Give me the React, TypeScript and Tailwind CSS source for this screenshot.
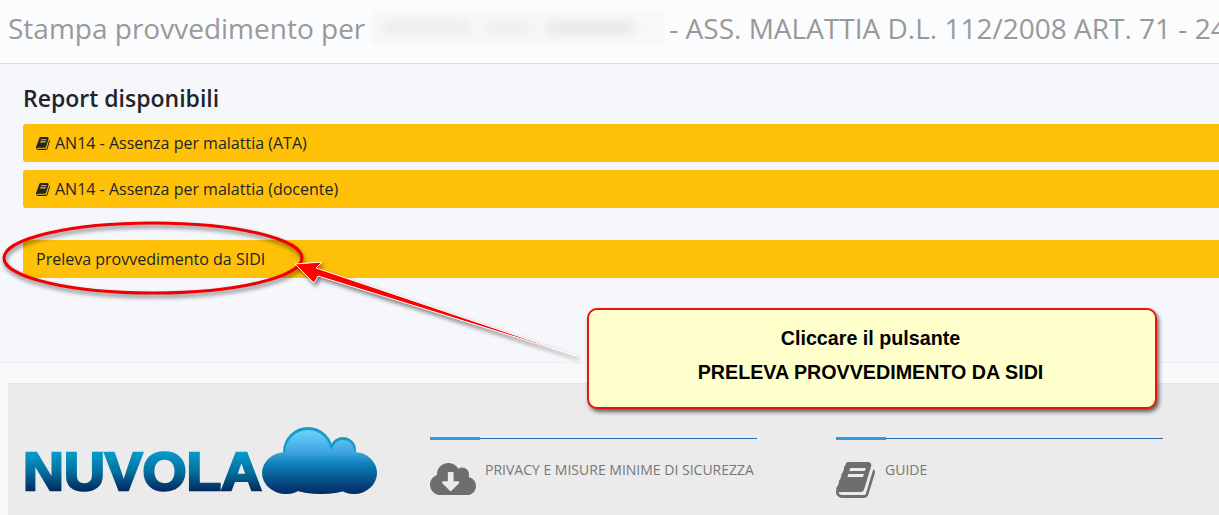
import type { ReactNode } from "react";
import { FaCloudDownloadAlt } from "react-icons/fa";

const BOOK_PATH =
  "M1639 478q40 57 18 129l-275 906q-19 64-76.5 107.5t-122.5 43.5h-923q-77 0-148.5-53.5t-99.5-131.5q-24-67-2-127 0-4 3-27t4-37q1-8-3-21.5t-3-19.5q2-11 8-21t16.5-23.5 16.5-23.5q23-38 45-91.5t30-91.5q3-10 .5-30t-.5-28q3-11 17-28t17-23q21-36 42-92t25-90q1-9-2.5-32t.5-28q4-13 22-30.5t22-22.5q19-26 42.5-84.5t27.5-96.5q1-8-3-25.5t-2-26.5q2-8 9-18t18-23 17-21q8-12 16.5-30.5t15-35 16-36 19.5-32 26.5-23.5 36-11.5 47.5 5.5l-1 3q38-9 51-9h761q74 0 114 56t18 130l-274 906q-36 119-71.5 153.5t-128.5 34.5h-869q-27 0-38 15-11 16-1 43 24 70 144 70h923q29 0 56-15.5t35-41.5l300-987q7-22 5-57 38 15 59 43zm-1064 2q-4 13 2 22.5t20 9.5h608q13 0 25.5-9.5t16.5-22.5l21-64q4-13-2-22.5t-20-9.5h-608q-13 0-25.5 9.5t-16.5 22.5zm-83 256q-4 13 2 22.5t20 9.5h608q13 0 25.5-9.5t16.5-22.5l21-64q4-13-2-22.5t-20-9.5h-608q-13 0-25.5 9.5t-16.5 22.5z";

const BookIcon = ({ className }: { className: string }) => (
  <svg viewBox="0 0 1792 1792" className={className} fill="currentColor">
    <path d={BOOK_PATH} />
  </svg>
);

const ReportBar = ({ label, icon }: { label: string; icon?: boolean }) => (
  <div className="flex h-[38px] w-[1230px] items-center gap-[4px] rounded-[3px] bg-[#ffc107] pl-[13px] text-[16px] text-[#212529]">
    {icon && <BookIcon className="h-[15px] w-[15px]" />}
    <span>{label}</span>
  </div>
);

const Logo = () => (
  <svg viewBox="0 0 354 68" className="h-[68px] w-[354px] shrink-0">
    <defs>
      <linearGradient id="letters" gradientUnits="userSpaceOnUse" x1="0" y1="25" x2="0" y2="64">
        <stop offset="0" stopColor="#049ccd" />
        <stop offset="0.5" stopColor="#04709f" />
        <stop offset="1" stopColor="#02295f" />
      </linearGradient>
      <linearGradient id="cloud" gradientUnits="userSpaceOnUse" x1="0" y1="1" x2="0" y2="67">
        <stop offset="0" stopColor="#6fd8ff" />
        <stop offset="0.36" stopColor="#3ea6e0" />
        <stop offset="0.55" stopColor="#0c7fb8" />
        <stop offset="1" stopColor="#022a62" />
      </linearGradient>
    </defs>
    <text
      x="0"
      y="63"
      textLength="239"
      lengthAdjust="spacingAndGlyphs"
      fontFamily="'Liberation Sans', sans-serif"
      fontWeight="700"
      fontSize="53"
      fill="url(#letters)"
      stroke="url(#letters)"
      strokeWidth="2.5"
    >
      NUVOLA
    </text>
    <circle cx="285" cy="25" r="24" fill="#1b9ac6" stroke="#1b9ac6" strokeWidth="2" />
    <circle cx="320" cy="23" r="12" fill="#1b9ac6" stroke="#1b9ac6" strokeWidth="2" />
    <g fill="url(#cloud)">
      <circle cx="285" cy="26" r="23" />
      <circle cx="320" cy="24" r="11" />
      <rect x="290" y="22" width="30" height="20" />
      <ellipse cx="263" cy="46" rx="24" ry="21" />
      <ellipse cx="331" cy="46" rx="23" ry="21" />
      <ellipse cx="298" cy="50" rx="42" ry="17" />
    </g>
  </svg>
);

const FooterColumn = ({
  label,
  className,
  icon,
}: {
  label: string;
  className: string;
  icon: ReactNode;
}) => (
  <div className={className}>
    <div className="relative h-[1px] w-[327px] bg-[#2a6ca8]">
      <div className="absolute top-[-1px] left-0 h-[3px] w-[50px] bg-[#3498db]" />
    </div>
    <div className="mt-[23px] flex items-start">
      {icon}
      <span className="text-[14px] leading-[16px] text-[#777]">{label}</span>
    </div>
  </div>
);

const App = () => {
  return (
    <div className="relative h-[515px] w-full overflow-hidden bg-[#f9f9f9] font-['Open_Sans',sans-serif]">
      <header className="flex h-[64px] items-center overflow-hidden border-b border-[#d5dde5] bg-[#fbfcfe] pb-[8px] pl-[8px] text-[28px] whitespace-nowrap text-[#999]">
        <span>Stampa provvedimento per</span>
        <div className="ml-[6px] flex h-[35px] w-[294px] shrink-0 items-center gap-[12px] bg-[#f8f8f8] px-[10px]">
          <div className="h-[13px] w-[90px] rounded-full bg-[#ececec] blur-[5px]" />
          <div className="h-[13px] w-[50px] rounded-full bg-[#eeeeee] blur-[5px]" />
          <div className="h-[13px] w-[90px] rounded-full bg-[#e8e8e8] blur-[5px]" />
        </div>
        <span className="ml-[4px]">- ASS. MALATTIA D.L. 112/2008 ART. 71 - 24 MESI</span>
      </header>

      <main className="h-[299px] border-b border-[#eeeeee] bg-[#f5f7fb] pt-[19px] pl-[23px]">
        <h3 className="text-[23px] leading-[30px] font-semibold text-[#212529]">
          Report disponibili
        </h3>
        <div className="mt-[11px] flex flex-col gap-[8px]">
          <ReportBar icon label="AN14 - Assenza per malattia (ATA)" />
          <ReportBar icon label="AN14 - Assenza per malattia (docente)" />
        </div>
        <div className="mt-[32px]">
          <ReportBar label="Preleva provvedimento da SIDI" />
        </div>
      </main>

      <footer className="mt-[20px] ml-[8px] flex h-[132px] border-t border-[#e5e5e5] bg-[#ebebeb]">
        <div className="mt-[43px] ml-[15px]">
          <Logo />
        </div>
        <FooterColumn
          className="mt-[54px] ml-[53px]"
          label="PRIVACY E MISURE MINIME DI SICUREZZA"
          icon={<FaCloudDownloadAlt className="mr-[9px] -mt-[6px] h-[46px] w-[46px] shrink-0 text-[#6e6e6e]" />}
        />
        <FooterColumn
          className="mt-[54px] ml-[79px]"
          label="GUIDE"
          icon={<BookIcon className="mr-[7px] -mt-[3px] h-[42px] w-[42px] shrink-0 text-[#6e6e6e]" />}
        />
      </footer>

      <svg className="pointer-events-none absolute top-0 left-0 h-[515px] w-[1219px]" viewBox="0 0 1219 515">
        <ellipse
          cx="153"
          cy="258"
          rx="149"
          ry="35"
          fill="none"
          stroke="#f00000"
          strokeWidth="3"
          className="drop-shadow-[1px_3px_2px_rgba(0,0,0,0.5)]"
        />
        <polygon
          points="295,264 322,262 316,268 577,356 318,276 314,283"
          fill="#ff0000"
          stroke="#ffffff"
          strokeWidth="1"
          className="drop-shadow-[2px_3px_2px_rgba(0,0,0,0.5)]"
        />
      </svg>

      <div className="absolute top-[308px] left-[587px] flex h-[101px] w-[570px] flex-col items-center rounded-[10px] border-2 border-[#ee1111] bg-[#ffffcc] pt-[16px] pr-[3px] font-['Liberation_Sans',sans-serif] text-[19.7px] leading-[24px] font-bold text-black shadow-[2px_3px_4px_rgba(0,0,0,0.6)]">
        <div>Cliccare il pulsante</div>
        <div className="mt-[10px]">PRELEVA PROVVEDIMENTO DA SIDI</div>
      </div>
    </div>
  );
};

export default App;
